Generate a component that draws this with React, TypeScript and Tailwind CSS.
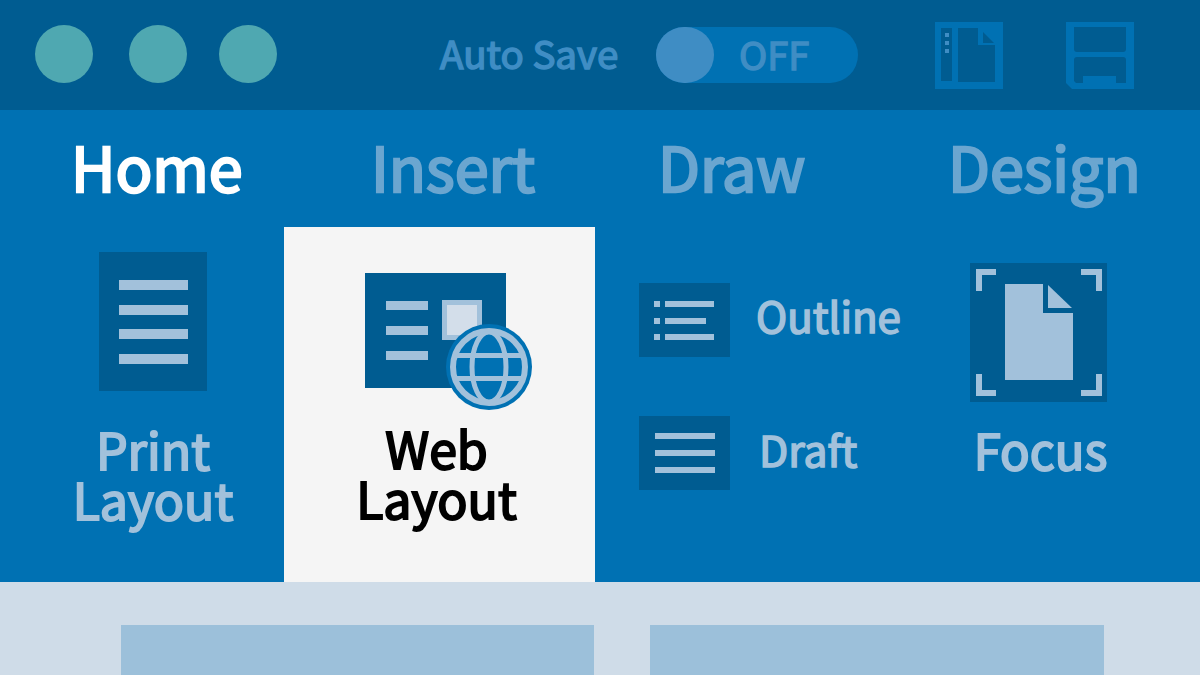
import React from "react";

const font = { fontFamily: '"Noto Sans CJK SC", "Noto Sans", sans-serif' };

function PrintIcon() {
  return (
    <div className="w-[108px] h-[139px] bg-[#005c91] flex flex-col items-center pt-[28px] gap-[14.5px]">
      {[0, 1, 2, 3].map((i) => (
        <div key={i} className="w-[69px] h-[10px] bg-[#a2c1db]" />
      ))}
    </div>
  );
}

function WebIcon() {
  return (
    <svg width="170" height="140" viewBox="0 0 170 140" className="block">
      <defs>
        <clipPath id="globe">
          <circle cx="124" cy="94" r="36" />
        </clipPath>
      </defs>
      <rect x="0" y="0" width="141" height="115" fill="#005c91" />
      <rect x="21" y="28" width="42" height="9" fill="#a2c1db" />
      <rect x="21" y="53" width="42" height="9" fill="#a2c1db" />
      <rect x="21" y="78" width="42" height="9" fill="#a2c1db" />
      <rect x="77" y="27" width="40" height="40" fill="#a2c1db" />
      <rect x="82" y="32" width="30" height="30" fill="#d3deea" />
      <circle cx="124" cy="94" r="43" fill="#0071b3" />
      <circle cx="124" cy="94" r="36" fill="#0071b3" stroke="#a2c1db" strokeWidth="6" />
      <g clipPath="url(#globe)" stroke="#a2c1db" fill="none">
        <ellipse cx="124" cy="94" rx="17" ry="35" strokeWidth="5" />
        <line x1="85" y1="82.5" x2="163" y2="82.5" strokeWidth="5" />
        <line x1="85" y1="105.5" x2="163" y2="105.5" strokeWidth="5" />
      </g>
    </svg>
  );
}

function OutlineIcon() {
  return (
    <svg width="91" height="74" viewBox="0 0 91 74" className="block">
      <rect width="91" height="74" fill="#005c91" />
      {[18, 35, 51].map((y, i) => (
        <g key={y} fill="#a2c1db">
          <rect x="15" y={y} width="6" height="6" />
          <rect x="26" y={y} width={i === 1 ? 41 : 49} height="6" />
        </g>
      ))}
    </svg>
  );
}

function DraftIcon() {
  return (
    <div className="w-[91px] h-[74px] bg-[#005c91] flex flex-col items-center justify-center gap-[11px]">
      {[0, 1, 2].map((i) => (
        <div key={i} className="w-[60px] h-[6px] bg-[#a2c1db]" />
      ))}
    </div>
  );
}

function FocusIcon() {
  return (
    <svg width="137" height="139" viewBox="0 0 137 139" className="block">
      <rect width="137" height="139" fill="#005c91" />
      <g fill="none" stroke="#a2c1db" strokeWidth="6">
        <path d="M9 28V9H26" />
        <path d="M111 9H129V28" />
        <path d="M9 111V130H26" />
        <path d="M111 130H129V111" />
      </g>
      <path d="M35 21H73V50H103V117H35Z" fill="#a2c1db" />
      <path d="M78 22L102 45H78Z" fill="#a2c1db" />
    </svg>
  );
}

function SidebarDocIcon() {
  return (
    <svg width="68" height="67" viewBox="0 0 68 67" className="block">
      <rect width="68" height="67" fill="#0071b3" />
      <rect x="6" y="6" width="11" height="53" fill="#005c91" />
      <path d="M23 6H43V23H60V60H23Z" fill="#005c91" />
      <path d="M48 10L59 21H48Z" fill="#005c91" />
      <g fill="#3f8dc4">
        <rect x="10" y="11" width="4" height="4" />
        <rect x="10" y="19" width="4" height="4" />
        <rect x="10" y="27" width="4" height="4" />
      </g>
    </svg>
  );
}

function SaveIcon() {
  return (
    <svg width="68" height="67" viewBox="0 0 68 67" className="block">
      <path d="M0 0H68V67H6L0 61Z" fill="#0071b3" />
      <path d="M8 5H60V27Q60 30 57 30H11Q8 30 8 27Z" fill="#005c91" />
      <path d="M11 35H57Q60 35 60 38V61H50V54H17V61H10L8 59V38Q8 35 11 35Z" fill="#005c91" />
    </svg>
  );
}

export default function App() {
  return (
    <div className="w-[1200px] h-[675px] overflow-hidden flex flex-col font-normal" style={font}>
      <header className="h-[110px] shrink-0 bg-[#005c91] flex items-center">
        <div className="ml-[35px] -mt-[2px] w-[58px] h-[58px] rounded-full bg-[#4fa8b1]" />
        <div className="ml-[36px] -mt-[2px] w-[58px] h-[58px] rounded-full bg-[#4fa8b1]" />
        <div className="ml-[32px] -mt-[2px] w-[58px] h-[58px] rounded-full bg-[#4fa8b1]" />
        <span className="ml-[163px] -mt-[5px] w-[179px] text-[38.5px] leading-none text-[#3f8dc4] whitespace-nowrap [-webkit-text-stroke-width:1.5px]">Auto Save</span>
        <div className="ml-[37px] w-[202px] h-[56px] rounded-full bg-[#0071b3] flex items-center">
          <div className="w-[58px] h-[56px] rounded-full bg-[#3f8dc4]" />
          <span className="ml-[25px] -mt-[3px] text-[38px] leading-none text-[#3f8dc4] [-webkit-text-stroke-width:1.5px]">OFF</span>
        </div>
        <div className="ml-[77px]"><SidebarDocIcon /></div>
        <div className="ml-[63px]"><SaveIcon /></div>
      </header>

      <main className="h-[472px] shrink-0 bg-[#0071b3] flex flex-col">
        <nav className="h-[117px] shrink-0 flex items-center text-[61px] leading-none text-[#6ba6d0] pb-[7px] [-webkit-text-stroke-width:2.4px]">
          <span className="ml-[71px] w-[300px] text-white">Home</span>
          <span className="w-[287px]">Insert</span>
          <span className="w-[290px]">Draw</span>
          <span>Design</span>
        </nav>
        <div className="flex-1 flex text-[#a2c1db]">
          <div className="w-[284px] flex flex-col items-center">
            <div className="mt-[25px] ml-[22px]"><PrintIcon /></div>
            <div className="mt-[32px] ml-[22px] text-[50px] leading-[50px] text-center [-webkit-text-stroke-width:2px]">Print<br />Layout</div>
          </div>
          <div className="w-[311px] bg-[#f5f5f5] flex flex-col items-center text-black">
            <div className="mt-[46px] ml-[21px] w-[170px]"><WebIcon /></div>
            <div className="mt-[9px] -ml-[6px] text-[50px] leading-[50px] text-center [-webkit-text-stroke-width:2px]">Web<br />Layout</div>
          </div>
          <div className="ml-[44px] w-[331px] flex flex-col">
            <div className="mt-[56px] flex items-center">
              <OutlineIcon />
              <span className="ml-[26px] -mt-[10px] text-[42px] leading-none [-webkit-text-stroke-width:1.6px]">Outline</span>
            </div>
            <div className="mt-[59px] flex items-center">
              <DraftIcon />
              <span className="ml-[29px] -mt-[8px] text-[42.5px] leading-none [-webkit-text-stroke-width:1.6px]">Draft</span>
            </div>
          </div>
          <div className="w-[137px] flex flex-col items-center">
            <div className="mt-[36px]"><FocusIcon /></div>
            <div className="mt-[22px] ml-[4px] text-[49px] leading-[50px] [-webkit-text-stroke-width:2px]">Focus</div>
          </div>
        </div>
      </main>

      <footer className="flex-1 bg-[#cfdce8] pt-[43px] pl-[121px] flex gap-[56px]">
        <div className="w-[473px] h-[60px] bg-[#9cc0da]" />
        <div className="w-[454px] h-[60px] bg-[#9cc0da]" />
      </footer>
    </div>
  );
}
